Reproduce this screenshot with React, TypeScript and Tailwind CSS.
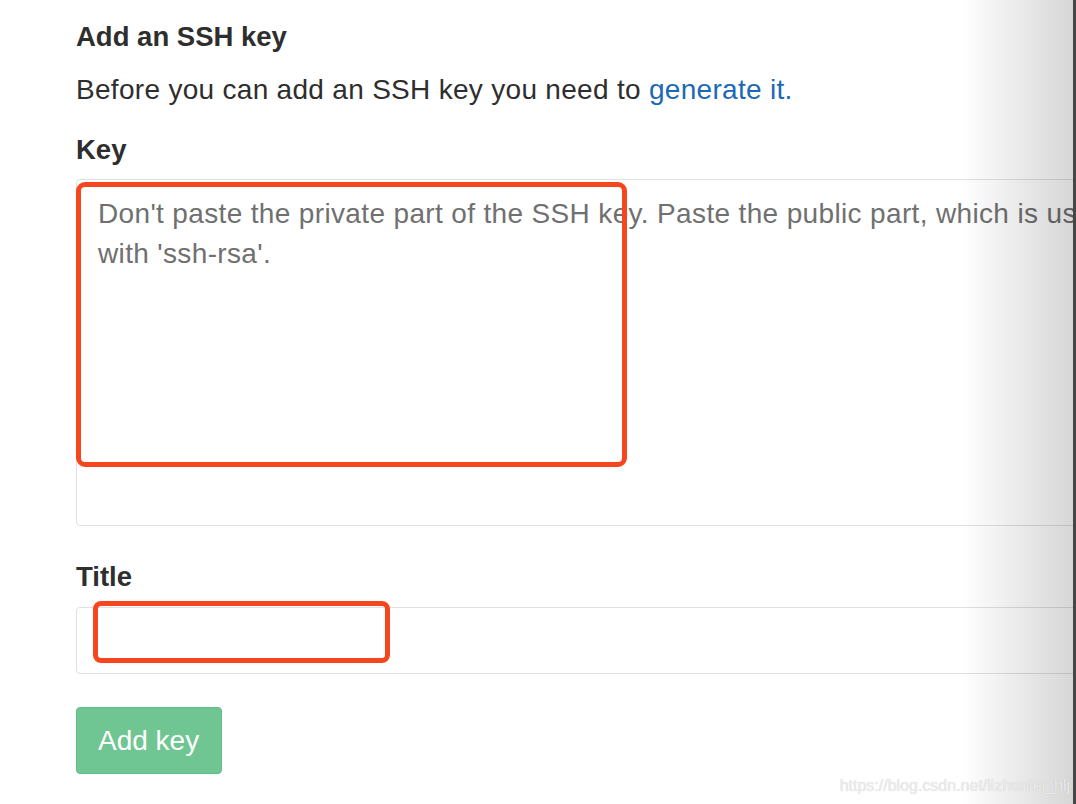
const font = "font-['Liberation_Sans','Helvetica_Neue',Arial,sans-serif]";

const App = () => {
  return (
    <div className={`relative w-[1076px] h-[804px] overflow-hidden bg-white text-[#2e2e2e] ${font}`}>
      <div className="flex flex-col pl-[76px] pt-[19px]">
        <h3 className="text-[27.5px] leading-[36px] font-bold">Add an SSH key</h3>
        <p className="mt-[17px] text-[28px] leading-[36px] tracking-[0.3px]">
          Before you can add an SSH key you need to{" "}
          <a href="#" className="text-[#1b69b6]">
            generate it.
          </a>
        </p>
        <label className="mt-[24px] text-[27.5px] leading-[36px] font-bold">Key</label>
        <div className="mt-[11px] w-[1040px] h-[347px] rounded-[4px] border border-[#e0e0e0] px-[21px] pt-[14px] text-[28px] leading-[40px] tracking-[0.35px] text-[#707070] whitespace-nowrap">
          <div>Don't paste the private part of the SSH key. Paste the public part, which is usually</div>
          <div>with 'ssh-rsa'.</div>
        </div>
        <label className="mt-[33px] text-[27.5px] leading-[36px] font-bold">Title</label>
        <div className="mt-[12px] w-[1040px] h-[67px] rounded-[4px] border border-[#e0e0e0]" />
        <button className="mt-[33px] w-[146px] h-[67px] rounded-[4px] bg-[#70c692] border border-[#62bc86] text-white text-[28px] text-left pl-[21px]">
          Add key
        </button>
      </div>

      {/* annotation boxes */}
      <div className="absolute left-[76px] top-[182px] w-[551px] h-[285px] rounded-[9px] border-[5px] border-[#f6461e] pointer-events-none" />
      <div className="absolute left-[93px] top-[601px] w-[297px] h-[62px] rounded-[8px] border-[5px] border-[#f6461e] pointer-events-none" />

      {/* window edge shadow */}
      <div className="absolute top-0 right-[3px] h-full w-[112px] bg-gradient-to-r from-white/0 to-black/[0.16] pointer-events-none" />
      <div className="absolute top-0 right-0 h-full w-[3px] bg-[#464646]" />

      <div className="absolute right-[6px] bottom-[6px] text-[16px] text-[#ececec] [text-shadow:0_0_1px_rgba(0,0,0,0.18)]">
        https://blog.csdn.net/lizhenlei_hlj
      </div>
    </div>
  );
};

export default App;
